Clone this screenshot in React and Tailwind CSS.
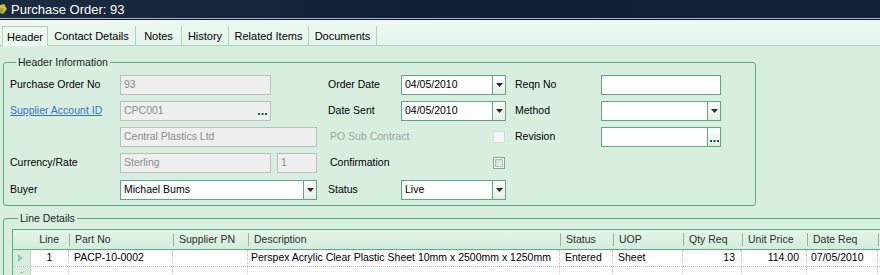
import React from 'react';

const font = { fontFamily: '"Liberation Sans", Arial, sans-serif' };

function DropArrow() {
    return (
        <svg width="7" height="4" viewBox="0 0 7 4"><path d="M0 0h7L3.5 4z" fill="#1f2f27" /></svg>
    );
}

function Dots() {
    return (
        <svg width="9" height="3" viewBox="0 0 9 3">
            <rect x="0" y="0" width="2" height="2" fill="#1e5a3a" />
            <rect x="3.5" y="0" width="2" height="2" fill="#1e5a3a" />
            <rect x="7" y="0" width="2" height="2" fill="#1e5a3a" />
        </svg>
    );
}

function TextBox({ value, width, disabled, dots }) {
    return (
        <div className={`h-[20px] ${width} flex items-center border ${disabled ? 'bg-[#efefef] border-[#b9c1bc] text-[#8c8c8c]' : 'bg-white border-[#5fa882] text-black'}`}>
            <span className="flex-1 pl-[3px] truncate">{value}</span>
            {dots && disabled && <span className="pr-[3px] pt-[6px] flex"><Dots /></span>}
            {dots && !disabled && (
                <span className="h-full w-[13px] border-l border-[#5fa882] bg-gradient-to-b from-white to-[#e4ece7] flex items-end justify-center pb-[3px]"><Dots /></span>
            )}
        </div>
    );
}

function Combo({ value, width }) {
    return (
        <div className={`h-[20px] ${width} flex items-center border bg-white border-[#5fa882]`}>
            <span className="flex-1 pl-[3px] truncate">{value}</span>
            <span className="h-full w-[13px] border-l border-[#5fa882] bg-gradient-to-b from-white to-[#e4ece7] flex items-center justify-center"><DropArrow /></span>
        </div>
    );
}

function Check({ disabled }) {
    return disabled ? (
        <span className="w-[12px] h-[12px] border border-[#d2dcd6] bg-[#f3f6f4]" />
    ) : (
        <span className="w-[12px] h-[12px] border border-[#8ca596] bg-white p-[1px] flex">
            <span className="flex-1 border border-[#a9bdb2] bg-gradient-to-br from-[#c7d6cd] to-[#f4f8f5]" />
        </span>
    );
}

const tabs = [
    { name: 'Header', w: 'w-[46px]' },
    { name: 'Contact Details', w: 'w-[88px]' },
    { name: 'Notes', w: 'w-[46px]' },
    { name: 'History', w: 'w-[47px]' },
    { name: 'Related Items', w: 'w-[80px]' },
    { name: 'Documents', w: 'w-[68px]' },
];

const cols = [
    { name: '', w: 'w-[18px]' },
    { name: 'Line', w: 'w-[38px]', align: 'justify-end pr-[10px]' },
    { name: 'Part No', w: 'w-[104px]' },
    { name: 'Supplier PN', w: 'w-[75px]' },
    { name: 'Description', w: 'w-[312px]' },
    { name: 'Status', w: 'w-[53px]' },
    { name: 'UOP', w: 'w-[70px]' },
    { name: 'Qty Req', w: 'w-[59px]' },
    { name: 'Unit Price', w: 'w-[65px]' },
    { name: 'Date Req', w: 'w-[71px]' },
];

const row = ['', '1', 'PACP-10-0002', '', 'Perspex Acrylic Clear Plastic Sheet 10mm x 2500mm x 1250mm', 'Entered', 'Sheet', '13', '114.00', '07/05/2010'];
const rowAlign = ['', 'justify-center', 'pl-[5px]', 'pl-[5px]', 'pl-[3px]', 'pl-[5px]', 'pl-[5px]', 'justify-end pr-[6px]', 'justify-end pr-[7px]', 'pl-[4px]'];

export default function App() {
    return (
        <div style={font} className="w-[880px] h-[275px] overflow-hidden bg-[#d8efe0] text-[10.5px] text-black">
            {/* title bar */}
            <div className="h-[18px] flex items-center bg-gradient-to-r from-[#1b2b40] via-[#0f1f35] to-[#11223a]">
                <svg width="10" height="12" viewBox="0 0 10 12" className="ml-[-2px]">
                    <path d="M0 3 L6 1 L9 6 L5 11 L0 9z" fill="#d8c23a" />
                    <path d="M0 6 L5 5 L6 9 L0 10z" fill="#8aa83a" />
                </svg>
                <span className="ml-[3px] text-[13px] text-white leading-none">Purchase Order: 93</span>
            </div>
            <div className="h-[1px] bg-[#a9b6be]" />
            <div className="h-[1px] bg-[#0c1726]" />

            {/* tab strip */}
            <div className="h-[26px] flex items-end bg-gradient-to-b from-[#eef8f1] to-[#e5f4ea] border-b border-[#a6d8b7] pl-[2px] text-[11px]">
                {tabs.map((t, i) => (
                    <div key={t.name} className={`${t.w} h-[19px] flex items-center justify-center pt-[1px] ${i === 0 ? 'border border-b-0 border-[#a6d8b7] bg-[#eef8f2] h-[20px] mb-[-1px]' : 'border-r border-[#a6d8b7]'}`}>
                        {t.name}
                    </div>
                ))}
            </div>

            {/* header information */}
            <fieldset className="ml-[3px] mt-[10px] w-[753px] border border-[#5eab82] rounded-[3px] pl-[6px] pb-[5px] pt-[6px]">
                <legend className="ml-[6px] px-[2px] leading-[13px] text-[#1d1d1d]">Header Information</legend>
                <div className="flex flex-col gap-[6px]">
                    <div className="flex items-center h-[20px]">
                        <div className="w-[318px] flex items-center">
                            <span className="w-[110px]">Purchase Order No</span>
                            <TextBox value="93" width="w-[151px]" disabled />
                        </div>
                        <div className="w-[187px] flex items-center">
                            <span className="w-[73px]">Order Date</span>
                            <Combo value="04/05/2010" width="w-[105px]" />
                        </div>
                        <div className="flex items-center">
                            <span className="w-[86px]">Reqn No</span>
                            <TextBox value="" width="w-[120px]" />
                        </div>
                    </div>
                    <div className="flex items-center h-[20px]">
                        <div className="w-[318px] flex items-center">
                            <span className="w-[110px] text-[#3a6fd0] underline">Supplier Account ID</span>
                            <TextBox value="CPC001" width="w-[151px]" disabled dots />
                        </div>
                        <div className="w-[187px] flex items-center">
                            <span className="w-[73px]">Date Sent</span>
                            <Combo value="04/05/2010" width="w-[105px]" />
                        </div>
                        <div className="flex items-center">
                            <span className="w-[86px]">Method</span>
                            <Combo value="" width="w-[120px]" />
                        </div>
                    </div>
                    <div className="flex items-center h-[20px]">
                        <div className="w-[318px] flex items-center">
                            <span className="w-[110px]" />
                            <TextBox value="Central Plastics Ltd" width="w-[197px]" disabled />
                        </div>
                        <div className="w-[187px] flex items-center">
                            <span className="w-[165px] pl-[2px] text-[#9aa59f]">PO Sub Contract</span>
                            <Check disabled />
                        </div>
                        <div className="flex items-center">
                            <span className="w-[86px]">Revision</span>
                            <TextBox value="" width="w-[120px]" dots />
                        </div>
                    </div>
                    <div className="flex items-center h-[20px]">
                        <div className="w-[318px] flex items-center">
                            <span className="w-[110px]">Currency/Rate</span>
                            <TextBox value="Sterling" width="w-[151px]" disabled />
                            <span className="w-[6px]" />
                            <TextBox value="1" width="w-[40px]" disabled />
                        </div>
                        <div className="w-[187px] flex items-center">
                            <span className="w-[165px] pl-[2px]">Confirmation</span>
                            <Check />
                        </div>
                    </div>
                    <div className="flex items-center h-[20px] mt-[1px]">
                        <div className="w-[318px] flex items-center">
                            <span className="w-[110px]">Buyer</span>
                            <Combo value="Michael Bums" width="w-[197px]" />
                        </div>
                        <div className="w-[187px] flex items-center">
                            <span className="w-[73px]">Status</span>
                            <Combo value="Live" width="w-[105px]" />
                        </div>
                    </div>
                </div>
            </fieldset>

            {/* line details */}
            <fieldset className="ml-[3px] mt-[6px] w-[900px] border border-[#5eab82] rounded-[3px] pl-[8px] pt-[4px]">
                <legend className="ml-[6px] px-[2px] leading-[13px] text-[#1d1d1d]">Line Details</legend>
                <div className="border border-[#5eab82] border-r-0 w-[880px]">
                    <div className="flex h-[20px] bg-gradient-to-b from-[#e3f5e9] to-[#d3ecdb] border-b border-[#5eab82]">
                        {cols.map((c, i) => (
                            <div key={i} className={`${c.w} shrink-0 flex items-center whitespace-nowrap ${c.align || ''}`}>
                                {i > 1 && <span className="w-[1px] h-[13px] bg-[#9db0a3] mr-[5px]" />}
                                <span className="text-[#2e2e2e]">{c.name}</span>
                            </div>
                        ))}
                        <span className="w-[1px] h-[13px] bg-[#9db0a3] self-center" />
                    </div>
                    <div className="flex h-[17px] bg-white border-b border-dotted border-[#bcbcbc]">
                        {row.map((v, i) => (
                            <div key={i} className={`${cols[i].w} shrink-0 flex items-center whitespace-nowrap overflow-hidden ${i === 0 ? 'bg-[#d6ecdd] border-r border-[#bfd9c7] pl-[5px]' : 'border-r border-dotted border-[#c4c4c4] ' + rowAlign[i]}`}>
                                {i === 0 ? (
                                    <svg width="5" height="8" viewBox="0 0 5 8"><path d="M0 0L5 4L0 8z" fill="#8ccc9f" /></svg>
                                ) : v}
                            </div>
                        ))}
                    </div>
                    <div className="flex h-[17px] bg-white">
                        {cols.map((c, i) => (
                            <div key={i} className={`${c.w} shrink-0 ${i === 0 ? 'bg-[#d6ecdd] border-r border-[#bfd9c7] flex justify-center pt-[5px]' : 'border-r border-dotted border-[#c4c4c4]'}`}>
                                {i === 0 && <span className="w-[3px] h-[1px] bg-[#8ccc9f]" />}
                            </div>
                        ))}
                    </div>
                </div>
            </fieldset>
        </div>
    );
}
